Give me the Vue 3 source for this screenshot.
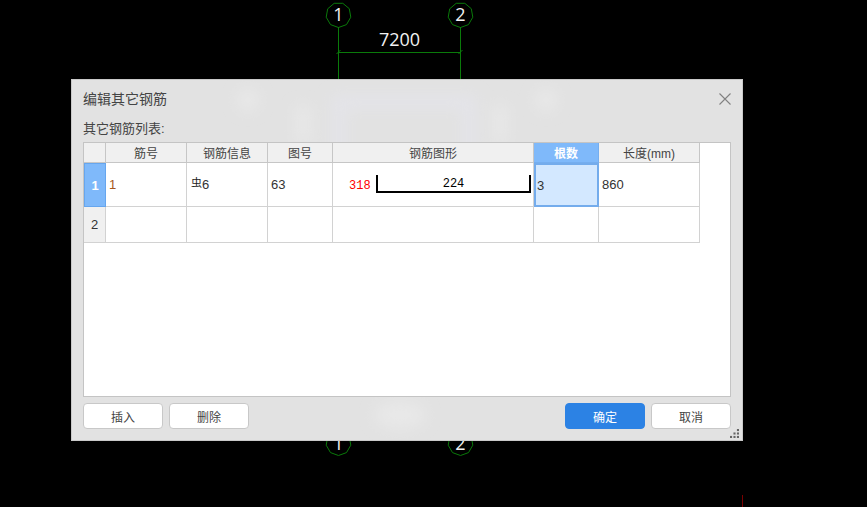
<script setup>
function ring(cx, cy, r, n = 9) {
  const pts = []
  for (let i = 0; i < n; i++) {
    const a = (Math.PI * 2 * i) / n + Math.PI / 2
    pts.push(`${(cx + r * Math.cos(a)).toFixed(1)},${(cy + r * Math.sin(a)).toFixed(1)}`)
  }
  return pts.join(' ')
}
const axes = [
  { x: 338.5, label: '1' },
  { x: 460.5, label: '2' }
]
const headers = ['筋号', '钢筋信息', '图号', '钢筋图形', '根数', '长度(mm)']
const dots = [[10, 0], [5, 5], [10, 5], [0, 10], [5, 10], [10, 10]]
</script>

<template>
  <div class="stage">
    <svg class="drawing" width="867" height="507" viewBox="0 0 867 507">
      <g v-for="a in axes" :key="a.x">
        <polygon :points="ring(a.x, 15, 12.5)" class="axis" />
        <polygon :points="ring(a.x, 443, 12.5)" class="axis" />
        <line :x1="a.x" :x2="a.x" y1="27" y2="80" class="axis" />
        <path :d="`M${a.x - 2} 54 L${a.x + 2} 50`" class="axis" />
        <text :x="a.x" y="21" class="num">{{ a.label }}</text>
        <text :x="a.x" y="450" class="num">{{ a.label }}</text>
      </g>
      <line x1="338" x2="461" y1="52.5" y2="52.5" class="axis" />
      <text x="399.5" y="46" class="dim">7200</text>
      <line x1="742.5" x2="742.5" y1="495" y2="507" class="mark" />
    </svg>

    <section class="dialog">
      <svg class="ghost" width="670" height="360" viewBox="0 0 670 360">
        <defs>
          <filter id="soft"><feGaussianBlur stdDeviation="7" /></filter>
        </defs>
        <g filter="url(#soft)">
          <path d="M267 80 V22 H397 V80" class="ghost-line" />
          <circle cx="176" cy="20" r="11" class="ghost-spot" />
          <circle cx="474" cy="20" r="11" class="ghost-spot" />
          <rect x="224" y="26" width="14" height="36" class="ghost-spot" />
          <rect x="421" y="26" width="14" height="36" class="ghost-spot" />
          <ellipse cx="328" cy="335" rx="26" ry="14" class="ghost-spot" />
        </g>
      </svg>

      <header class="title-row">
        <h1 class="title">编辑其它钢筋</h1>
        <svg class="close" width="12" height="12" viewBox="0 0 12 12">
          <path d="M.5 .5 L11.5 11.5 M11.5 .5 L.5 11.5" />
        </svg>
      </header>
      <p class="caption">其它钢筋列表:</p>

      <div class="table-box">
        <div class="table">
          <div class="cell head"></div>
          <div
            v-for="h in headers"
            :key="h"
            class="cell head"
            :class="{ 'head-active': h === '根数' }"
          >{{ h }}</div>

          <div class="cell head row-active">1</div>
          <div class="cell body orange">1</div>
          <div class="cell body"><span class="bar-sign">虫</span>6</div>
          <div class="cell body">63</div>
          <div class="cell shape">
            <span class="hook">318</span>
            <div class="rebar">224</div>
          </div>
          <div class="cell body selected">3</div>
          <div class="cell body">860</div>

          <div class="cell head row-idx">2</div>
          <div class="cell body"></div>
          <div class="cell body"></div>
          <div class="cell body"></div>
          <div class="cell body"></div>
          <div class="cell body"></div>
          <div class="cell body"></div>
        </div>
      </div>

      <footer class="actions">
        <button class="btn">插入</button>
        <button class="btn">删除</button>
        <span class="spacer"></span>
        <button class="btn primary">确定</button>
        <button class="btn">取消</button>
      </footer>

      <svg class="grip" width="13" height="13" viewBox="0 0 13 13">
        <rect v-for="d in dots" :key="d.join()" :x="d[0]" :y="d[1]" width="3" height="3" />
      </svg>
    </section>
  </div>
</template>

<style>
html, body { margin: 0; background: #000; }
</style>

<style scoped>
.stage {
  position: relative;
  width: 867px;
  height: 507px;
  background: #000;
  overflow: hidden;
  font-family: "Liberation Sans", "Noto Sans CJK SC", sans-serif;
}
.drawing { position: absolute; left: 0; top: 0; }
.axis { fill: none; stroke: #0a7a0a; stroke-width: 1; }
.mark { stroke: #7a0000; stroke-width: 1; }
.num, .dim {
  fill: #f2f2f2;
  text-anchor: middle;
  font-family: "Open Sans", "Liberation Sans", sans-serif;
}
.num { font-size: 18px; }
.dim { font-size: 18px; }

.dialog {
  position: absolute;
  left: 71px;
  top: 79px;
  width: 672px;
  height: 362px;
  box-sizing: border-box;
  border: 1px solid #c9c9c9;
  background: #e2e2e2;
  padding: 0 11px 0 11px;
  display: flex;
  flex-direction: column;
  color: #333;
}
.ghost { position: absolute; left: 0; top: 0; pointer-events: none; }
.ghost-line { fill: none; stroke: #e4e4e9; stroke-width: 14; }
.ghost-spot { fill: #e8e8e8; }

.title-row {
  position: relative;
  height: 36px;
  display: flex;
  align-items: center;
  justify-content: space-between;
}
.title {
  margin: 0;
  font-size: 14px;
  font-weight: 400;
  color: #444;
}
.close { margin: 1px 0 0; }
.close path { stroke: #808080; stroke-width: 1.1; fill: none; }
.caption {
  position: relative;
  margin: 4px 0 0;
  height: 22px;
  font-size: 13px;
  line-height: 18px;
  color: #444;
}
.table-box {
  position: relative;
  box-sizing: border-box;
  width: 648px;
  height: 255px;
  background: #fff;
  border: 1px solid #c4c4c4;
}
.table {
  display: grid;
  grid-template-columns: 22px 81px 81px 65px 201px 65px 101px;
  grid-template-rows: 20px 44px 36px;
  width: 616px;
}
.cell {
  box-sizing: border-box;
  border-right: 1px solid #d2d2d2;
  border-bottom: 1px solid #d2d2d2;
  display: flex;
  align-items: center;
  font-size: 12.5px;
  color: #333;
}
.head {
  justify-content: center;
  background: #f0f0f0;
  border-color: #c6c6c6;
  font-size: 12px;
  color: #444;
}
.head-active {
  background: #7fb9fa;
  color: #fff;
  font-weight: 700;
  border-color: #75aeef;
}
.row-active {
  background: #7fb9fa;
  color: #fff;
  font-weight: 700;
  border: 1px solid #66a6ee;
  font-size: 13px;
}
.row-idx { font-size: 13px; border-color: #d2d2d2; color: #333; }
.body { padding-left: 3px; font-size: 13px; }
.orange { color: #a4561c; }
.bar-sign {
  font-size: 11px;
  margin: -5px 0 0 1px;
  color: #222;
}
.shape {
  padding-left: 16px;
  gap: 5px;
}
.hook {
  font-family: "Liberation Mono", monospace;
  font-size: 12px;
  color: #f00;
  width: 22px;
  margin-top: 2px;
}
.rebar {
  box-sizing: border-box;
  width: 155px;
  height: 18px;
  margin-top: -2px;
  border: 2px solid #000;
  border-top: 0;
  text-align: center;
  font-family: "Liberation Mono", monospace;
  font-size: 12px;
  line-height: 18px;
  color: #000;
}
.selected {
  background: #d3e8ff;
  border: 2px solid #74acec;
  padding-left: 1px;
}
.actions {
  position: relative;
  display: flex;
  gap: 6px;
  margin-top: 6px;
  height: 26px;
}
.spacer { flex: 1; }
.btn {
  box-sizing: border-box;
  width: 80px;
  height: 26px;
  padding: 0;
  border: 1px solid #c8c8c8;
  border-radius: 4px;
  background: #fff;
  color: #444;
  font-family: inherit;
  font-size: 12px;
}
.primary {
  background: #2c82e4;
  border-color: #2c82e4;
  color: #fff;
}
.grip {
  position: absolute;
  right: 3px;
  bottom: 2px;
  width: 9px;
  height: 9px;
}
.grip rect { fill: #666; }
</style>
